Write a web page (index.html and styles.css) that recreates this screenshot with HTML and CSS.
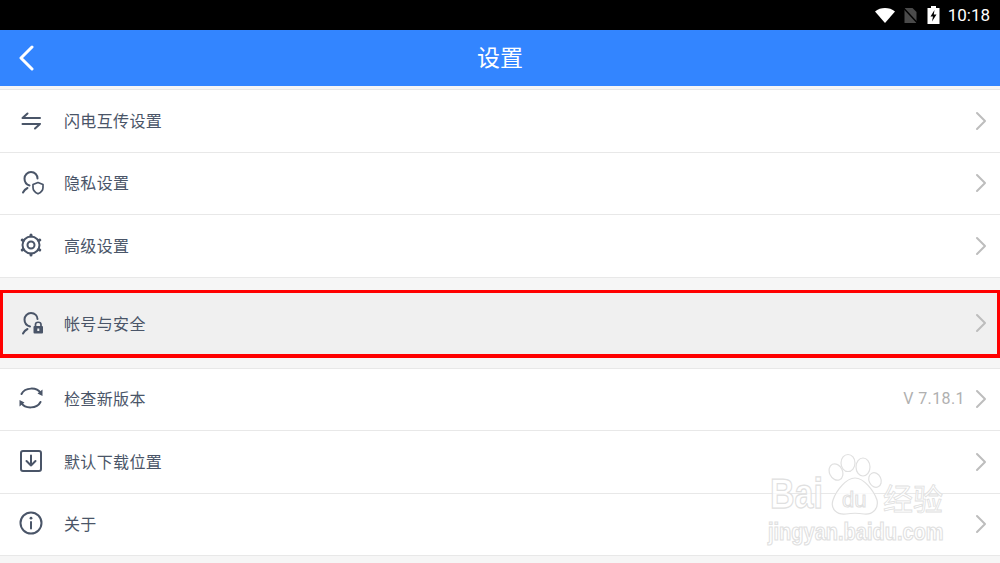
FILE: index.html
```html
<!DOCTYPE html>
<html lang="zh">
<head>
<meta charset="utf-8">
<title>设置</title>
<link rel="stylesheet" href="styles.css">
</head>
<body>
<div class="screen">
  <div class="status">
    <svg class="s-wifi" width="20" height="15" viewBox="0 0 20 15"><path d="M0 3.500C5.500-1.100 14.500-1.100 20 3.500L10 15Z" fill="#fff"/></svg>
    <svg class="s-sim" width="15" height="15" viewBox="0 0 14 15"><path d="M1 0H9L13 4V15H1Z" fill="#4a4a4a"/><path d="M0 0L14 15" stroke="#000" stroke-width="1.500"/></svg>
    <svg class="s-bat" width="13" height="18" viewBox="0 0 12 18"><path fill-rule="evenodd" d="M3.500 0H8.500V2H12V18H0V2H3.500ZM7 4L3 10.500H5.500L4.500 15.500L9 8.500H6.300Z" fill="#fff"/></svg>
    <span class="clock">10:18</span>
  </div>
  <header class="bar">
    <svg class="back" width="16" height="26" viewBox="0 0 16 26"><path d="M14 2L3 13L14 24" fill="none" stroke="#fff" stroke-width="3" stroke-linecap="round" stroke-linejoin="round"/></svg>
    <h1 class="title">设置</h1>
  </header>

  <section class="group first">
    <div class="row">
      <svg class="icon" width="26" height="26" viewBox="0 0 26 26"><path class="ln" d="M4.500 11H22M4.500 11L9.500 6.500M22 17H4.500M22 17L17 21.500"/></svg>
      <span class="label">闪电互传设置</span>
      <svg class="chev" width="12" height="20" viewBox="0 0 12 20"><path d="M2 2L10 10L2 18"/></svg>
    </div>
    <div class="row">
      <svg class="icon" width="26" height="26" viewBox="0 0 26 26"><path class="ln" d="M5 23.500C5.800 21.800 7 20.200 9.500 19M19.500 9.500C19.500 6 17 3 13 3C9.500 3 6.500 6 6.500 9.500C6.500 13 8.500 15.500 11.500 16.500"/><path class="ln thin" d="M15 15.500L20 13.500L25 15.500V18.500C25 21.500 22.800 23.500 20 24.800C17.200 23.500 15 21.500 15 18.500Z"/></svg>
      <span class="label">隐私设置</span>
      <svg class="chev" width="12" height="20" viewBox="0 0 12 20"><path d="M2 2L10 10L2 18"/></svg>
    </div>
    <div class="row">
      <svg class="icon" width="26" height="26" viewBox="0 0 26 26"><circle class="ln" cx="13" cy="13" r="8.500"/><circle class="ln" cx="13" cy="13" r="3.500"/><path class="nub" d="M13 3V4M13 22V23M4.300 8L5.200 8.500M20.800 17.500L21.700 18M4.300 18L5.200 17.500M20.800 8.500L21.700 8"/></svg>
      <span class="label">高级设置</span>
      <svg class="chev" width="12" height="20" viewBox="0 0 12 20"><path d="M2 2L10 10L2 18"/></svg>
    </div>
  </section>

  <section class="group selected">
    <div class="row">
      <svg class="icon" width="26" height="26" viewBox="0 0 26 26"><path class="ln" d="M5 23.500C5.800 21.800 7 20.200 9.500 19M19.500 9C19.500 6 17 3 13 3C9.500 3 6.500 6 6.500 9.500C6.500 13 8.500 15.500 12 16.500"/><rect x="15.500" y="16" width="9.500" height="7.500" rx="1" fill="#4a5568"/><rect x="19.300" y="18.500" width="2" height="2.500" fill="#f0f0f0"/><path class="ln thin" d="M17.500 16V14.500C17.500 11.500 23 11.500 23 14.500V16"/></svg>
      <span class="label">帐号与安全</span>
      <svg class="chev" width="12" height="20" viewBox="0 0 12 20"><path d="M2 2L10 10L2 18"/></svg>
    </div>
  </section>

  <section class="group last">
    <div class="row">
      <svg class="icon" width="26" height="26" viewBox="0 0 26 26"><path class="ln" d="M3.500 9C7 2 19 2 22.500 8"/><path class="ln" d="M3.500 18C7 24 19 24 22.500 17"/><path d="M19.500 8.500L24.500 4.500L24.500 11Z M6.500 17.500L1.500 21.500L1.500 15Z" fill="#4a5568"/></svg>
      <span class="label">检查新版本</span>
      <span class="value">V 7.18.1</span>
      <svg class="chev" width="12" height="20" viewBox="0 0 12 20"><path d="M2 2L10 10L2 18"/></svg>
    </div>
    <div class="row">
      <svg class="icon" width="26" height="26" viewBox="0 0 26 26"><rect class="ln" x="3" y="3" width="20" height="20" rx="2"/><path class="ln" d="M13 7.500V17.500M8.500 13L13 17.500L17.500 13"/></svg>
      <span class="label">默认下载位置</span>
      <svg class="chev" width="12" height="20" viewBox="0 0 12 20"><path d="M2 2L10 10L2 18"/></svg>
    </div>
    <div class="row">
      <svg class="icon" width="26" height="26" viewBox="0 0 26 26"><circle class="ln" cx="13" cy="13" r="10.500"/><path class="ln" d="M13 12V18.500"/><circle cx="13" cy="8.200" r="1.400" fill="#4a5568"/></svg>
      <span class="label">关于</span>
      <svg class="chev" width="12" height="20" viewBox="0 0 12 20"><path d="M2 2L10 10L2 18"/></svg>
    </div>
  </section>

  <div class="mark">
    <div class="mark-top">
      <span class="mark-bai">Bai</span>
      <svg class="mark-paw" width="56" height="62" viewBox="0 0 56 62"><g class="paw"><ellipse cx="8" cy="19" rx="6.500" ry="8.500" transform="rotate(-25 8 19)"/><ellipse cx="20" cy="10" rx="7" ry="8.500"/><ellipse cx="35" cy="14" rx="7" ry="9"/><ellipse cx="47" cy="27" rx="6" ry="7.500" transform="rotate(-25 47 27)"/><path d="M27 25C36 25 46 38 49 47C51 56 44 62 36 61C30 60 24 60 18 61C9 62 2 56 5 47C8 38 18 25 27 25Z"/></g></svg>
      <span class="mark-du">du</span>
      <span class="mark-cn">经验</span>
    </div>
    <div class="mark-url">jingyan.baidu.com</div>
  </div>
</div>
</body>
</html>
```

FILE: styles.css
```css
* { box-sizing: border-box; margin: 0; padding: 0; }
html, body { width: 1000px; height: 563px; overflow: hidden; }
body { font-family: "Roboto", "Noto Sans CJK SC", sans-serif; background: #f6f6f6; }
.screen { position: relative; width: 1000px; height: 563px; overflow: hidden; }

.status { height: 30px; background: #000; display: flex; align-items: center; justify-content: flex-end; padding-right: 10px; }
.s-wifi { margin-right: 8px; }
.s-sim { margin-right: 9px; }
.s-bat { margin-right: 8px; }
.clock { color: #fff; font-size: 17px; line-height: 30px; }

.bar { height: 56px; background: #3385ff; position: relative; display: flex; align-items: center; justify-content: center; padding-bottom: 4px; }
.back { position: absolute; left: 18px; top: 15px; }
.title { color: #fff; font-size: 23px; font-weight: 400; line-height: 50px; font-family: "Noto Sans CJK SC", sans-serif; }

.group { background: #fff; border-top: 1px solid #e8e8e8; }
.group.first { margin-top: 3px; }
.group.last { margin-top: 10px; }
.row { height: 62.500px; display: flex; align-items: center; padding: 0 13px 2px 18px; border-bottom: 1px solid #e8e8e8; }
.icon { flex: none; margin-right: 20px; }
.ln { fill: none; stroke: #4a5568; stroke-width: 2; stroke-linecap: round; stroke-linejoin: round; }
.thin { stroke-width: 1.700; }
.nub { fill: none; stroke: #4a5568; stroke-width: 3; stroke-linecap: round; }
.label { flex: 1; font-family: "Noto Sans CJK SC", sans-serif; font-size: 16px; color: #4a5568; letter-spacing: .35px; }
.value { font-size: 16px; color: #b0b0b0; margin-right: 10px; letter-spacing: .4px; }
.chev { flex: none; margin-top: 2px; }
.chev path { fill: none; stroke: #bdbdbd; stroke-width: 2; stroke-linecap: round; stroke-linejoin: round; }

.selected { margin-top: 12px; border: 3px solid #f00; border-bottom-width: 4px; background: #f0f0f0; height: 68px; }
.selected .row { height: 61px; border-bottom: 0; padding: 0 10px 1px 15px; }
.selected .chev { margin-top: 0; }

.mark { position: absolute; left: 770px; top: 453px; width: 190px; pointer-events: none; }
.mark-top { display: flex; align-items: flex-end; height: 62px; }
.mark-bai, .mark-du, .mark-url, .mark-cn { color: rgba(255,255,255,.75); -webkit-text-stroke: 1px #e0e0e0; font-family: "Liberation Sans", sans-serif; }
.mark-bai { font-size: 34px; font-weight: 700; line-height: 36px; transform: scale(1, 1.25); transform-origin: left 85%; margin-bottom: 1px; }
.mark-paw { margin-left: 5px; flex: none; }
.paw { fill: rgba(255,255,255,.75); stroke: #e0e0e0; stroke-width: 1.200; }
.mark-du { position: absolute; left: 72px; top: 36px; font-size: 22px; line-height: 22px; }
.mark-cn { font-family: "Noto Sans CJK SC", sans-serif; font-size: 30px; line-height: 36px; margin-left: -1px; -webkit-text-stroke-width: .8px; white-space: nowrap; }
.mark-url { font-size: 20px; font-weight: 700; line-height: 24px; margin: 3px 0 0 -2px; white-space: nowrap; transform: scale(1, 1.15); transform-origin: left top; }
```
